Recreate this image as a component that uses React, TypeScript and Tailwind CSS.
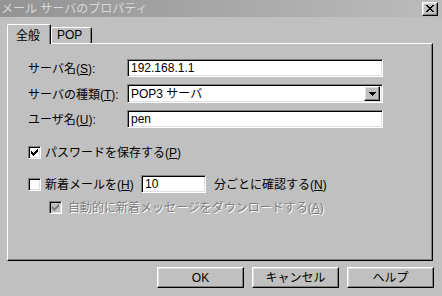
import React from "react";

const font = { fontFamily: '"Liberation Sans", "Noto Sans CJK JP", sans-serif' };

const sunken =
  "border border-t-[#808080] border-l-[#808080] border-b-white border-r-white shadow-[inset_1px_1px_0_#000,inset_-1px_-1px_0_#dfdfdf]";
const raised =
  "border border-t-white border-l-white border-b-black border-r-black shadow-[inset_-1px_-1px_0_#808080,inset_1px_1px_0_#dfdfdf]";

function Check({ color }: { color: string }) {
  return (
    <svg width="7" height="7" viewBox="0 0 7 7" shapeRendering="crispEdges">
      <path
        d="M0 2h1v3h-1zM1 3h1v3h-1zM2 4h1v3h-1zM3 3h1v3h-1zM4 2h1v3h-1zM5 1h1v3h-1zM6 0h1v3h-1z"
        fill={color}
      />
    </svg>
  );
}

function CheckBox({ checked, disabled }: { checked?: boolean; disabled?: boolean }) {
  return (
    <div
      className={`w-[13px] h-[13px] flex items-center justify-center shrink-0 ${sunken} ${
        disabled ? "bg-[#c0c0c0]" : "bg-white"
      }`}
    >
      {checked && <Check color={disabled ? "#808080" : "#000"} />}
    </div>
  );
}

function Field({ value, width }: { value: string; width: string }) {
  return (
    <div className={`h-[18px] ${width} bg-white ${sunken} flex items-center pl-[3px] text-[12px] text-black`}>
      {value}
    </div>
  );
}

function Label({ text, k, tail }: { text: string; k: string; tail?: string }) {
  return (
    <span className="text-[12px] text-black whitespace-nowrap">
      {text}(<u>{k}</u>){tail}
    </span>
  );
}

export default function App() {
  return (
    <div className="w-[442px] h-[296px] bg-[#c0c0c0] flex flex-col overflow-hidden select-none" style={font}>
      <div className="h-[17px] flex items-center bg-linear-to-r from-[#939393] to-[#bcbcbc]">
        <span className="text-[12px] text-[#d8d8d8] pl-[1px] leading-none">メール サーバのプロパティ</span>
        <div className={`ml-auto mr-[4px] w-[16px] h-[14px] bg-[#c0c0c0] flex items-center justify-center ${raised}`}>
          <svg width="8" height="7" viewBox="0 0 8 7" shapeRendering="crispEdges">
            <path d="M0 0h2v1h-2zM1 1h2v1h-2zM2 2h4v1h-4zM3 3h2v1h-2zM2 4h4v1h-4zM1 5h2v1h-2zM0 6h2v1h-2zM6 0h2v1h-2zM5 1h2v1h-2zM5 5h2v1h-2zM6 6h2v1h-2z" fill="#000" />
          </svg>
        </div>
      </div>

      <div className="pl-[7px] pt-[7px] flex items-end relative z-10 -mb-px">
        <div className="w-[44px] h-[20px] bg-[#c0c0c0] border-l border-t border-white border-r border-r-black rounded-tl-[2px] rounded-tr-[2px] shadow-[inset_-1px_0_0_#808080] flex items-start pt-[2px] pl-[8px] text-[12px] text-black">
          全般
        </div>
        <div className="w-[41px] h-[16px] bg-[#c0c0c0] border-l border-t border-white border-r border-r-black rounded-tl-[2px] rounded-tr-[2px] shadow-[inset_-1px_0_0_#808080] flex items-start pl-[5px] text-[12px] text-black leading-[15px] mb-px">
          POP
        </div>
      </div>

      <div className="ml-[7px] w-[426px] h-[218px] border border-t-white border-l-white border-b-black border-r-black shadow-[inset_-1px_-1px_0_#808080] pl-[20px] pt-[15px] flex flex-col">
        <div className="flex items-center h-[18px]">
          <div className="w-[99px]">
            <Label text="サーバ名" k="S" tail=":" />
          </div>
          <Field value="192.168.1.1" width="w-[256px]" />
        </div>
        <div className="flex items-center h-[19px] mt-[7px]">
          <div className="w-[99px]">
            <Label text="サーバの種類" k="T" tail=":" />
          </div>
          <div className={`h-[19px] w-[256px] bg-white ${sunken} flex items-center pl-[3px] pr-[2px] text-[12px] text-black`}>
            <span className="flex-1">POP3 サーバ</span>
            <div className={`w-[16px] h-[15px] bg-[#c0c0c0] flex items-center justify-center ${raised}`}>
              <svg width="7" height="4" viewBox="0 0 7 4" shapeRendering="crispEdges">
                <path d="M0 0h7v1h-7zM1 1h5v1h-5zM2 2h3v1h-3zM3 3h1v1h-1z" fill="#000" />
              </svg>
            </div>
          </div>
        </div>
        <div className="flex items-center h-[18px] mt-[7px]">
          <div className="w-[99px]">
            <Label text="ユーザ名" k="U" tail=":" />
          </div>
          <Field value="pen" width="w-[256px]" />
        </div>

        <div className="flex items-center gap-[4px] mt-[18px] h-[13px]">
          <CheckBox checked />
          <Label text="パスワードを保存する" k="P" />
        </div>

        <div className="flex items-center mt-[16px] h-[18px]">
          <CheckBox />
          <span className="ml-[4px] w-[96px]">
            <Label text="新着メールを" k="H" />
          </span>
          <Field value="10" width="w-[65px]" />
          <span className="ml-[8px]">
            <Label text="分ごとに確認する" k="N" />
          </span>
        </div>

        <div className="flex items-center gap-[6px] mt-[8px] ml-[21px] h-[13px]">
          <CheckBox checked disabled />
          <span className="text-[12px] text-[#808080] whitespace-nowrap [text-shadow:1px_1px_0_#fff]">
            自動的に新着メッセージをダウンロードする(<u>A</u>)
          </span>
        </div>
      </div>

      <div className="flex justify-end gap-[8px] pr-[8px] mt-[6px]">
        {["OK", "キャンセル", "ヘルプ"].map((t) => (
          <div
            key={t}
            className={`w-[87px] h-[21px] bg-[#c0c0c0] flex items-center justify-center text-[12px] text-black ${raised}`}
          >
            {t}
          </div>
        ))}
      </div>
    </div>
  );
}
